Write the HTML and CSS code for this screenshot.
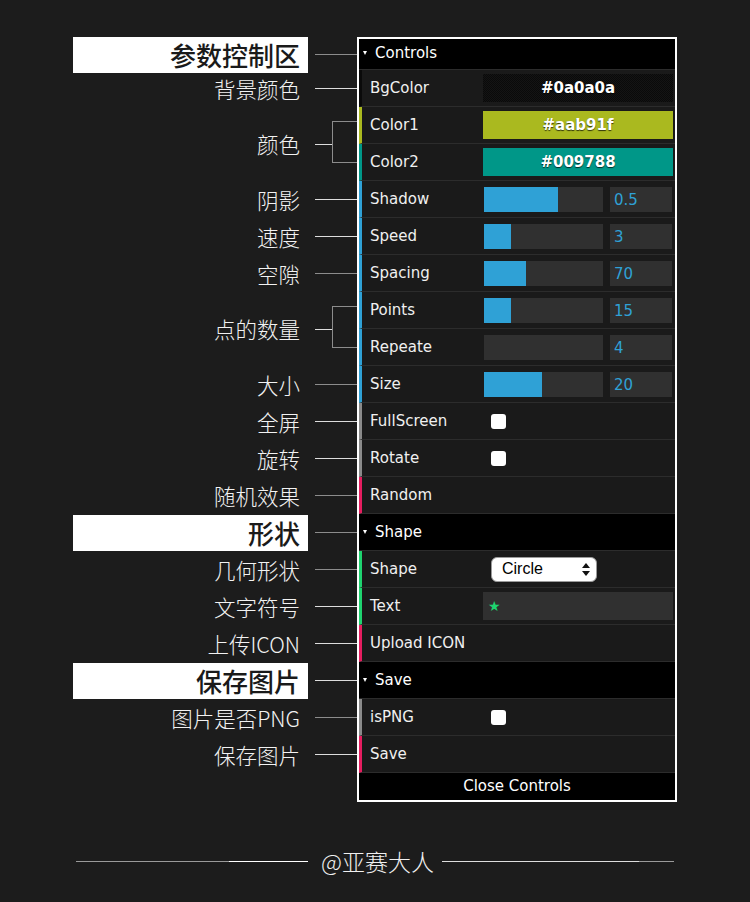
FILE: index.html
```html
<!DOCTYPE html>
<html lang="zh-CN">

<head>
    <meta charset="UTF-8">
    <meta name="viewport" content="width=device-width, initial-scale=1.0">
    <title>参数控制区</title>

    <link rel="stylesheet" href="styles.css">
</head>

<body>
    <div class="wrap">
        <!-- 左侧说明 -->
        <div class="notes">
            <div class="note top"><span class="tag">参数控制区</span><i class="ln dim"></i></div>
            <div class="note"><span class="label">背景颜色</span><i class="ln"></i></div>
            <div class="note pair"><span class="label">颜色</span><i class="stub"></i><i class="brace"></i></div>
            <div class="note"><span class="label">阴影</span><i class="ln"></i></div>
            <div class="note"><span class="label">速度</span><i class="ln"></i></div>
            <div class="note"><span class="label">空隙</span><i class="ln dim"></i></div>
            <div class="note pair"><span class="label">点的数量</span><i class="stub"></i><i class="brace"></i></div>
            <div class="note"><span class="label">大小</span><i class="ln dim"></i></div>
            <div class="note"><span class="label">全屏</span><i class="ln"></i></div>
            <div class="note"><span class="label">旋转</span><i class="ln"></i></div>
            <div class="note"><span class="label">随机效果</span><i class="ln dim"></i></div>
            <div class="note"><span class="tag">形状</span><i class="ln dim"></i></div>
            <div class="note"><span class="label">几何形状</span><i class="ln dim"></i></div>
            <div class="note"><span class="label">文字符号</span><i class="ln"></i></div>
            <div class="note"><span class="label">上传ICON</span><i class="ln"></i></div>
            <div class="note"><span class="tag">保存图片</span><i class="ln"></i></div>
            <div class="note"><span class="label">图片是否PNG</span><i class="ln dim"></i></div>
            <div class="note"><span class="label">保存图片</span><i class="ln"></i></div>
        </div>

        <!-- 控制面板 -->
        <div class="gui">
            <div class="title first"><i class="arrow"></i>Controls</div>

            <div class="cr bg">
                <span class="name">BgColor</span>
                <div class="c"><div class="swatch dark">#0a0a0a</div></div>
            </div>
            <div class="cr c1">
                <span class="name">Color1</span>
                <div class="c"><div class="swatch olive">#aab91f</div></div>
            </div>
            <div class="cr c2">
                <span class="name">Color2</span>
                <div class="c"><div class="swatch teal">#009788</div></div>
            </div>

            <div class="cr number">
                <span class="name">Shadow</span>
                <div class="c"><div class="track"><div class="fill" style="width: 62%"></div></div><div class="num">0.5</div></div>
            </div>
            <div class="cr number">
                <span class="name">Speed</span>
                <div class="c"><div class="track"><div class="fill" style="width: 23%"></div></div><div class="num">3</div></div>
            </div>
            <div class="cr number">
                <span class="name">Spacing</span>
                <div class="c"><div class="track"><div class="fill" style="width: 35%"></div></div><div class="num">70</div></div>
            </div>
            <div class="cr number">
                <span class="name">Points</span>
                <div class="c"><div class="track"><div class="fill" style="width: 23%"></div></div><div class="num">15</div></div>
            </div>
            <div class="cr number">
                <span class="name">Repeate</span>
                <div class="c"><div class="track"><div class="fill" style="width: 0%"></div></div><div class="num">4</div></div>
            </div>
            <div class="cr number">
                <span class="name">Size</span>
                <div class="c"><div class="track"><div class="fill" style="width: 49%"></div></div><div class="num">20</div></div>
            </div>

            <div class="cr boolean">
                <span class="name">FullScreen</span>
                <div class="c"><span class="check"></span></div>
            </div>
            <div class="cr boolean">
                <span class="name">Rotate</span>
                <div class="c"><span class="check"></span></div>
            </div>
            <div class="cr function">
                <span class="name">Random</span>
            </div>

            <div class="title"><i class="arrow"></i>Shape</div>
            <div class="cr string">
                <span class="name">Shape</span>
                <div class="c">
                    <div class="select">
                        <span>Circle</span>
                        <svg width="8" height="13" viewBox="0 0 8 13">
                            <polygon points="0,5 4,0 8,5" fill="#111" />
                            <polygon points="0,8 8,8 4,13" fill="#111" />
                        </svg>
                    </div>
                </div>
            </div>
            <div class="cr string">
                <span class="name">Text</span>
                <div class="c"><div class="field">★</div></div>
            </div>
            <div class="cr function">
                <span class="name">Upload ICON</span>
            </div>

            <div class="title"><i class="arrow"></i>Save</div>
            <div class="cr boolean">
                <span class="name">isPNG</span>
                <div class="c"><span class="check"></span></div>
            </div>
            <div class="cr function">
                <span class="name">Save</span>
            </div>

            <div class="close">Close Controls</div>
        </div>
    </div>

    <div class="footer">
        <i class="fl left"></i>
        <span class="sign">@亚赛大人</span>
        <i class="fl right"></i>
    </div>
</body>

</html>
```

FILE: styles.css
```css
* {
    margin: 0;
    padding: 0;
    box-sizing: border-box;
}

body {
    background: #1c1c1c;
    width: 750px;
    height: 902px;
    overflow: hidden;
}

.wrap {
    display: flex;
    align-items: flex-start;
    padding: 37px 0 0 73px;
}

/* 左侧说明文字 */
.notes {
    width: 284px;
    padding-top: 2px;
    font-family: "Noto Sans CJK SC", sans-serif;
}

.note {
    height: 37px;
    display: flex;
    align-items: center;
    justify-content: flex-end;
}

.note.top {
    height: 31px;
}

.note.pair {
    height: 74px;
}

.label {
    font-size: 21.5px;
    font-weight: 300;
    color: #f2f2f2;
    line-height: 1;
    margin-right: 15px;
}

.tag {
    flex-shrink: 0;
    width: 235px;
    height: 36px;
    line-height: 36px;
    margin-right: 7px;
    padding-right: 8px;
    background: #ffffff;
    color: #1a1a1a;
    font-size: 26px;
    font-weight: 500;
    text-align: right;
}

.ln {
    width: 42px;
    height: 1px;
    background: #dddddd;
}

.ln.dim {
    background: #8c8c8c;
}

.stub {
    width: 17px;
    height: 1px;
    background: #dddddd;
}

.brace {
    width: 25px;
    height: 42px;
    margin-bottom: 5px;
    border: 1px solid #8c8c8c;
    border-right: 0;
}

/* 控制面板 */
.gui {
    width: 320px;
    border: 2px solid #ffffff;
    background: #1a1a1a;
    font-family: "DejaVu Sans", sans-serif;
    font-size: 15px;
    color: #f0f0f0;
}

.title {
    height: 37px;
    display: flex;
    align-items: center;
    padding-left: 4px;
    background: #000000;
    border-bottom: 1px solid #2c2c2c;
    color: #ffffff;
}

.title.first {
    height: 31px;
    padding-bottom: 2px;
}

.arrow {
    width: 0;
    height: 0;
    margin-right: 8px;
    border-left: 2.5px solid transparent;
    border-right: 2.5px solid transparent;
    border-top: 4px solid #ffffff;
}

.cr {
    height: 37px;
    display: flex;
    align-items: center;
    border-bottom: 1px solid #2c2c2c;
    border-left: 3px solid #1a1a1a;
}

.cr.bg { border-left-color: #0a0a0a; }
.cr.c1 { border-left-color: #aab91f; }
.cr.c2 { border-left-color: #009788; }
.cr.number { border-left-color: #2fa1d6; }
.cr.boolean { border-left-color: #8a8a8a; }
.cr.function { border-left-color: #e61d5f; }
.cr.string { border-left-color: #1ed36f; }

.name {
    flex-shrink: 0;
    width: 121px;
    padding-left: 8px;
}

.c {
    flex: 1;
    display: flex;
    align-items: center;
    padding-right: 2px;
}

.swatch {
    flex: 1;
    height: 28px;
    display: flex;
    align-items: center;
    justify-content: center;
    font-weight: bold;
    color: #ffffff;
    text-shadow: 0 1px 1px rgba(0, 0, 0, 0.7);
}

.swatch.dark {
    background: repeating-conic-gradient(#0a0a0a 0 25%, #141414 0 50%) 0 0 / 2px 2px;
}

.swatch.olive { background: #aab91f; }
.swatch.teal { background: #009788; }

.track {
    width: 119px;
    height: 25px;
    margin-left: 1px;
    background: #303030;
}

.fill {
    height: 100%;
    background: #2fa1d6;
}

.num {
    width: 62px;
    height: 25px;
    margin-left: 7px;
    padding-left: 4px;
    line-height: 27px;
    background: #303030;
    color: #2fa1d6;
}

.check {
    width: 15px;
    height: 15px;
    margin-left: 8px;
    border-radius: 3px;
    background: #ffffff;
}

.select {
    width: 106px;
    height: 25px;
    margin-left: 8px;
    padding: 0 6px 0 10px;
    display: flex;
    align-items: center;
    justify-content: space-between;
    border: 1px solid #9a9a9a;
    border-radius: 6px;
    background: #ffffff;
    color: #000000;
    font-family: "Liberation Sans", sans-serif;
    font-size: 16px;
}

.field {
    flex: 1;
    height: 28px;
    padding-left: 5px;
    display: flex;
    align-items: center;
    background: #303030;
    color: #1ed36f;
    font-size: 14px;
}

.close {
    height: 27px;
    line-height: 27px;
    text-align: center;
    background: #000000;
    color: #ffffff;
}

/* 底部署名 */
.footer {
    margin-top: 42px;
    display: flex;
    align-items: center;
    justify-content: center;
    font-family: "Noto Sans CJK SC", sans-serif;
}

.fl {
    width: 232px;
    height: 1px;
}

.fl.left {
    background: linear-gradient(90deg, #9a9a9a 66%, #ffffff 66%);
}

.fl.right {
    background: linear-gradient(90deg, #dddddd 85%, #9a9a9a 85%);
}

.sign {
    margin: 0 8px 0 13px;
    font-size: 23px;
    font-weight: 300;
    color: #f0f0f0;
}
```
